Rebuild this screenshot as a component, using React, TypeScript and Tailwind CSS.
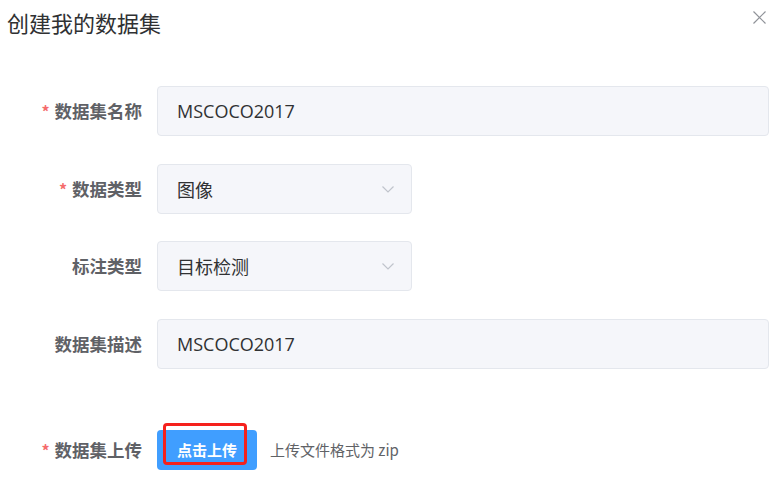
import React from "react";

const font = { fontFamily: '"Noto Sans CJK SC", "Noto Sans", sans-serif' };
const latin = { fontFamily: '"Open Sans", "Noto Sans CJK SC", sans-serif' };

function Label({ text, required }: { text: string; required?: boolean }) {
  return (
    <div className="w-[142px] shrink-0 flex justify-end items-center text-[17.5px] font-bold text-[#5f6166]">
      {required && <span className="text-[#f56c6c] mr-[5px] text-[16px] font-bold">*</span>}
      <span>{text}</span>
    </div>
  );
}

function Chevron() {
  return (
    <svg width="14" height="14" viewBox="0 0 14 14" fill="none">
      <path d="M1.5 4.5 L7 10 L12.5 4.5" stroke="#c0c4cc" strokeWidth="1.2" />
    </svg>
  );
}

export default function App() {
  return (
    <div className="w-[783px] h-[498px] bg-white relative overflow-hidden" style={font}>
      <div className="pl-[7px] pt-[4px] h-[40px] text-[22px] leading-[36px] text-[#303133]">创建我的数据集</div>
      <button className="absolute left-[752px] top-[10px] w-[14px] h-[14px] flex items-center justify-center">
        <svg width="13" height="13" viewBox="0 0 13 13" fill="none">
          <path d="M0.5 0.5 L12.5 12.5 M12.5 0.5 L0.5 12.5" stroke="#909399" strokeWidth="1.2" />
        </svg>
      </button>

      <div className="flex flex-col pt-[46px]">
        <div className="flex items-center h-[50px]">
          <Label text="数据集名称" required />
          <div className="ml-[15px] w-[612px] h-[50px] rounded-[4px] bg-[#f5f6fa] border border-[#e4e7ed] flex items-center pl-[19px] text-[18px] text-[#303133]" style={latin}>
            MSCOCO2017
          </div>
        </div>

        <div className="flex items-center h-[50px] mt-[28px]">
          <Label text="数据类型" required />
          <div className="ml-[15px] w-[255px] h-[50px] rounded-[4px] bg-[#f5f6fa] border border-[#e4e7ed] flex items-center justify-between pl-[19px] pr-[16px] text-[18px] text-[#303133]">
            <span>图像</span>
            <Chevron />
          </div>
        </div>

        <div className="flex items-center h-[50px] mt-[27px]">
          <Label text="标注类型" />
          <div className="ml-[15px] w-[255px] h-[50px] rounded-[4px] bg-[#f5f6fa] border border-[#e4e7ed] flex items-center justify-between pl-[19px] pr-[16px] text-[18px] text-[#303133]">
            <span>目标检测</span>
            <Chevron />
          </div>
        </div>

        <div className="flex items-center h-[50px] mt-[28px]">
          <Label text="数据集描述" />
          <div className="ml-[15px] w-[612px] h-[50px] rounded-[4px] bg-[#f5f6fa] border border-[#e4e7ed] flex items-center pl-[19px] text-[18px] text-[#303133]" style={latin}>
            MSCOCO2017
          </div>
        </div>

        <div className="flex items-center h-[40px] mt-[61px]">
          <Label text="数据集上传" required />
          <div className="ml-[15px] relative w-[100px] h-[40px] rounded-[4px] bg-[#409eff] flex items-center justify-center text-white text-[15px] font-bold">
            点击上传
            <div className="absolute left-[6px] top-[-7px] w-[84px] h-[42px] border-[3px] border-[#f5211d] rounded-[4px]" />
          </div>
          <span className="ml-[13px] text-[15px] text-[#606266]">上传文件格式为 zip</span>
        </div>
      </div>
    </div>
  );
}
